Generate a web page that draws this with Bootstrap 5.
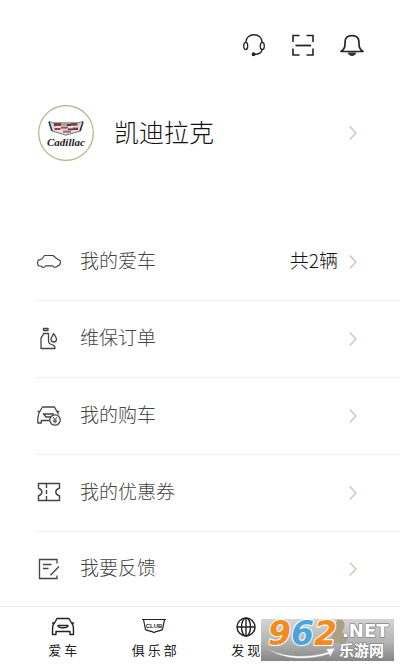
<!DOCTYPE html>
<html lang="zh-CN">
<head>
<meta charset="utf-8">
<meta name="viewport" content="width=device-width, initial-scale=1">
<title>凯迪拉克</title>
<link rel="stylesheet" href="https://cdn.jsdelivr.net/npm/bootstrap@5.3.0/dist/css/bootstrap.min.css">
<style>
body { font-family: "Noto Sans CJK SC", sans-serif; font-weight: 300; color: #444; background: #fff; }
svg { fill: none; stroke: currentColor; display: block; flex: none; }
.app-actions { gap: 25px; padding: 33px 36px 0; color: #333; }
.icon-btn { width: 24px; height: 24px; }
.profile { margin-top: 48px; padding: 0 43px 0 38px; color: #111; }
.profile-name { font-size: 25px; line-height: 32px; margin-left: 20px; padding-bottom: 4px; }
.menu-list { margin: 63px 0 0 36px; }
.menu-row { height: 77px; padding-right: 43px; border-bottom: 1px solid #f1f0ee; color: #444; font-size: 19px; line-height: 24px; }
.menu-row:last-child { height: 74px; border-bottom: 0; }
.menu-label, .menu-count { padding-bottom: 4px; }
.menu-label { margin-left: 18px; }
.menu-count { color: #111; margin-right: 11px; }
.chevron { stroke: #c9c3b0; }
.tab-bar { border-top: 1px solid #ebebeb; padding: 9px 17px 7px; }
.tab-btn { color: #222; font-size: 13px; line-height: 20px; gap: 2px; }
.site-mark { right: 6px; bottom: 6px; }
</style>
<script src="https://cdn.jsdelivr.net/npm/bootstrap@5.3.0/dist/js/bootstrap.bundle.min.js"></script>
</head>
<body>
<div class="d-flex flex-column min-vh-100">
  <header class="app-actions d-flex justify-content-end">
    <button type="button" class="icon-btn btn p-0 border-0" aria-label="客服">
      <svg width="24" height="24" viewBox="0 0 24 24" stroke-width="1.3"><path d="M4 10C3 -1 21 -1 20 10"/><ellipse cx="3.7" cy="13" rx="2" ry="3.7"/><ellipse cx="20.3" cy="13" rx="2" ry="3.7"/><path d="M20 17c-.5 2.500-3 4.300-7 4.300"/><circle cx="11.600" cy="21.300" r="1.300" fill="#333"/></svg>
    </button>
    <button type="button" class="icon-btn btn p-0 border-0" aria-label="扫一扫">
      <svg width="24" height="24" viewBox="0 0 24 24" stroke-width="1.6"><path d="M2 9V2.500h6.500M15.500 2.500H22V9M2 15.500V22h6.500M15.500 22H22v-6.500"/><path d="M4.500 12.500h15.500" stroke-width="1.800"/></svg>
    </button>
    <button type="button" class="icon-btn btn p-0 border-0" aria-label="消息">
      <svg width="24" height="24" viewBox="0 0 24 24" stroke-width="1.700" stroke-linejoin="round"><path d="M1 18.500c3-2 4-3.500 4-7V9.500C5 5 8 2.700 12 2.700s7 2.300 7 6.800v2c0 3.500 1 5 4 7Z"/><path d="M7.500 19.500h9c-.6 2-2.400 3.500-4.500 3.500s-3.900-1.500-4.500-3.500Z" fill="#333" stroke="none"/></svg>
    </button>
  </header>

  <a href="#" class="profile d-flex align-items-center text-decoration-none">
    <svg width="56" height="56" viewBox="0 0 56 56" role="img">
      <circle cx="28" cy="28" r="27.300" fill="#fff" stroke="#b9ae84" stroke-width="1.200"/>
      <g stroke="none">
        <path d="M11 16.500l4.500 1.300h24.500l5-1.300-2.500 9.500L28 30.200 14 26Z" fill="#d8dadd" stroke="#555a62" stroke-width=".8"/>
        <path d="M15 18h26l-1.500 3.500H16Z" fill="#a5a49b"/>
        <path d="M16 18h7v3h-7zM33 18h6v2.500h-6z" fill="#8e3b3e"/><path d="M23 21h7v2.500h-7zM35 22.500h5v2.500h-5z" fill="#9d2a32"/>
        <path d="M16.500 23h6v2h-6zM25 25h8v2.500h-8z" fill="#a33a3e"/><path d="M29 19h4v2h-4zM30 23.500h5v2h-5z" fill="#3c4149"/>
        <path d="M18 21.700h22M19 25.800h19" stroke="#f4f4f4" stroke-width=".8"/>
        <path d="M11 17l3 9M45 17l-3 9" stroke="#29384c" stroke-width="1.500"/>
        <text x="9" y="41" font-family="Liberation Serif, serif" font-size="11" font-style="italic" font-weight="bold" fill="#222">Cadillac</text>
      </g>
    </svg>
    <span class="profile-name">凯迪拉克</span>
    <svg class="chevron ms-auto" width="8" height="16" viewBox="0 0 8 16" stroke-width="1.300"><path d="M.7 1.500 7 8 .7 14.500"/></svg>
  </a>

  <nav class="menu-list" aria-label="我的">
    <a href="#" class="menu-row d-flex align-items-center text-decoration-none">
      <svg width="26" height="26" viewBox="0 0 26 26" stroke-width="1.200" stroke-linejoin="round"><path d="M5 17H3.300C1 16.500 1 12 3 10.800l3-.8 2.500-3.500h8.500l4.500 3.800 2 .8c1.500 1 1.300 4-.5 5.300l-1.500.5c-1.500 2-3.500 2-4.500 0H9.500c-1 2-3.500 2-4.500.1Z"/></svg>
      <span class="menu-label">我的爱车</span><span class="menu-count ms-auto">共2辆</span>
      <svg class="chevron" width="8" height="16" viewBox="0 0 8 16" stroke-width="1.300"><path d="M.7 1.500 7 8 .7 14.500"/></svg>
    </a>
    <a href="#" class="menu-row d-flex align-items-center text-decoration-none">
      <svg width="26" height="26" viewBox="0 0 26 26" stroke-width="1.300" stroke-linejoin="round"><path d="M7.500 2.500h4.500V4.500H7.500zM7.500 7.500h5v6.500c0 3 .5 3.500 3 4.500 2.800 1 3.500 1.500 3.500 4H5V12.500c0-2 2.500-2.500 2.500-5ZM17.700 7.500c1.500 2.500 2.800 4 2.800 5.800 0 3.600-5.500 3.600-5.500 0 0-1.800 1.500-3.300 2.700-5.800Z"/></svg>
      <span class="menu-label">维保订单</span>
      <svg class="chevron ms-auto" width="8" height="16" viewBox="0 0 8 16" stroke-width="1.300"><path d="M.7 1.500 7 8 .7 14.500"/></svg>
    </a>
    <a href="#" class="menu-row d-flex align-items-center text-decoration-none">
      <svg width="26" height="26" viewBox="0 0 26 26" stroke-width="1.300" stroke-linejoin="round"><path d="M1.500 8.500h2.300L6.500 4h12l2.500 4.500h2.300M3.800 8.500c-2 3-2.300 5-2 11.500h3.500v-2.500h8M21 8.500l1.500 3M7 11h11M8 11.500l2 2.500h5"/><circle cx="19" cy="17" r="5.200"/><path d="m17 14 2 2.500 2-2.500M19 16.500v4M17 17h4M17 18.700h4" stroke-width=".9"/></svg>
      <span class="menu-label">我的购车</span>
      <svg class="chevron ms-auto" width="8" height="16" viewBox="0 0 8 16" stroke-width="1.300"><path d="M.7 1.500 7 8 .7 14.500"/></svg>
    </a>
    <a href="#" class="menu-row d-flex align-items-center text-decoration-none">
      <svg width="26" height="26" viewBox="0 0 26 26" stroke-width="1.400"><path d="M2.500 3.500h21V8c-5 2-5 6 0 8v4.500h-21V16c4.500-2 4.500-6 0-8Z"/><path d="M10.500 4v16" stroke-dasharray="4 2"/></svg>
      <span class="menu-label">我的优惠券</span>
      <svg class="chevron ms-auto" width="8" height="16" viewBox="0 0 8 16" stroke-width="1.300"><path d="M.7 1.500 7 8 .7 14.500"/></svg>
    </a>
    <a href="#" class="menu-row d-flex align-items-center text-decoration-none">
      <svg width="26" height="26" viewBox="0 0 26 26" stroke-width="1.300"><path d="M21 7.500V3.500H3.500v19H21v-3"/><path d="M7 8.500h8.500M7 12.500h5.500M23 10.500l-8.500 8.800"/></svg>
      <span class="menu-label">我要反馈</span>
      <svg class="chevron ms-auto" width="8" height="16" viewBox="0 0 8 16" stroke-width="1.300"><path d="M.7 1.500 7 8 .7 14.500"/></svg>
    </a>
  </nav>

  <footer class="tab-bar position-relative mt-auto">
    <div class="row row-cols-4 g-0">
      <div class="col"><button type="button" class="tab-btn btn w-100 p-0 border-0 d-flex flex-column align-items-center">
        <svg width="26" height="22" viewBox="0 0 26 22" stroke-width="1.400" stroke-linejoin="round"><path d="M2 7h2.500L7 2.500h12L21.500 7H24M4.500 7C2.500 9 2.500 10 2.500 18.500H6V15.500h14v3h3.500C23.500 10 23.500 9 21.500 7M8 9.500h10c0 3-10 3-10 0Z"/></svg>
        <span>爱 车</span></button></div>
      <div class="col"><button type="button" class="tab-btn btn w-100 p-0 border-0 d-flex flex-column align-items-center">
        <svg width="26" height="22" viewBox="0 0 26 22" stroke-width="1.200"><path d="M1 3.500h24M2.500 3.500l2 10c1 1 5 1.500 8.500 3 3.500-1.500 7.500-2 8.500-3l2-10"/><text x="13" y="12" text-anchor="middle" font-family="Liberation Sans, sans-serif" font-size="6" font-weight="bold" fill="currentColor" stroke="none">CLUB</text></svg>
        <span>俱 乐 部</span></button></div>
      <div class="col"><button type="button" class="tab-btn btn w-100 p-0 border-0 d-flex flex-column align-items-center">
        <svg width="22" height="22" viewBox="0 0 22 22" stroke-width="1.400"><circle cx="11" cy="11" r="9"/><ellipse cx="11" cy="11" rx="4.500" ry="9"/><path d="M11 2v18M2 11h18"/></svg>
        <span>发 现</span></button></div>
    </div>
    <div class="site-mark position-absolute">
      <svg width="134" height="50" viewBox="0 -8 134 50">
        <defs><linearGradient id="silver" x1="0" y1="0" x2="0" y2="1"><stop offset="0" stop-color="#d4d4d4"/><stop offset=".55" stop-color="#b4b4b4"/><stop offset="1" stop-color="#858585"/></linearGradient></defs>
        <g stroke="none">
          <path d="M1 0h133v42H1z" fill="url(#silver)"/>
          <path d="M77 1c6-2 9 3 7 8l-2 4c1 3 5 3 6 7l-3 4H70l3-10Z" fill="#aaa087"/>
          <path d="M6 29c19 10 43 10 62 4l-2-3 9-1-5 9-1-3C47 42 23 41 6 29Z" fill="#fff" stroke="#999" stroke-width=".5"/>
          <g font-family="DejaVu Sans, sans-serif" font-weight="bold" paint-order="stroke" stroke-linejoin="round">
            <text x="8" y="26" font-size="33" font-style="italic" stroke="#fff" stroke-width="2"><tspan fill="#f28c20">9</tspan><tspan fill="#4ba5db">6</tspan><tspan fill="#f28c20">2</tspan></text>
            <text x="82" y="18" font-size="18" fill="#fff" stroke="#888" stroke-width="1.500">.NET</text>
          </g>
          <text x="79" y="37" font-family="Noto Sans CJK SC, sans-serif" font-weight="bold" font-size="15" fill="#fff" stroke="#888" stroke-width="1.500" paint-order="stroke">乐游网</text>
        </g>
      </svg>
    </div>
  </footer>
</div>
</body>
</html>
